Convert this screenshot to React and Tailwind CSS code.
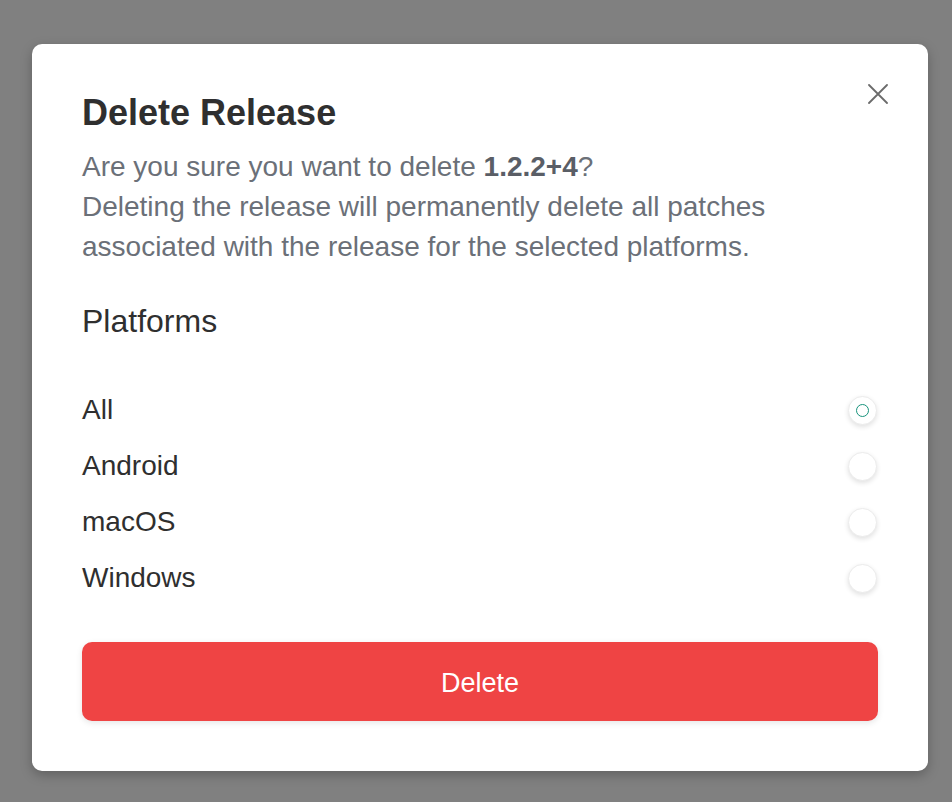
import { useState } from "react";

const platforms = ["All", "Android", "macOS", "Windows"];

function Radio({ checked, onClick }) {
  return (
    <button
      type="button"
      onClick={onClick}
      className="w-[29px] h-[29px] rounded-full bg-white border border-[#ececec] shadow-[0_2px_5px_rgba(0,0,0,0.12)] flex items-center justify-center"
    >
      {checked && (
        <span className="block w-[13px] h-[13px] rounded-full border-[1.5px] border-[#17937c]" />
      )}
    </button>
  );
}

export default function App() {
  const [selected, setSelected] = useState("All");

  return (
    <div
      className="min-h-screen bg-[#808080] pt-[44px] pl-[32px]"
      style={{ fontFamily: '"Liberation Sans", Arial, sans-serif' }}
    >
      <div className="relative w-[896px] bg-white rounded-[10px] shadow-[0_4px_12px_rgba(0,0,0,0.25)] px-[50px] pt-[47px] pb-[50px]">
        {/* 닫기 */}
        <button type="button" className="absolute right-[40px] top-[40px] w-[20px] h-[20px]">
          <svg viewBox="0 0 20 20" width="20" height="20" fill="none" stroke="#6b6b6b" strokeWidth="1.8" strokeLinecap="round">
            <path d="M1 1L19 19M19 1L1 19" />
          </svg>
        </button>

        <h1 className="text-[36px] leading-[44px] font-bold text-[#2f2f2f]">Delete Release</h1>

        <div className="mt-[12px] text-[28px] leading-[40px] text-[#6b7078]">
          <p>
            Are you sure you want to delete <span className="font-bold text-[#5a5e66]">1.2.2+4</span>?
          </p>
          <p>Deleting the release will permanently delete all patches associated with the release for the selected platforms.</p>
        </div>

        <h2 className="mt-[34px] text-[32px] leading-[40px] text-[#2f2f2f]">Platforms</h2>

        {/* 플랫폼 목록 */}
        <div className="mt-[41px] flex flex-col">
          {platforms.map((p) => (
            <div key={p} className="h-[56px] flex items-center justify-between pr-[1px]">
              <span className="text-[28px] text-[#2f2f2f]">{p}</span>
              <Radio checked={selected === p} onClick={() => setSelected(p)} />
            </div>
          ))}
        </div>

        <button
          type="button"
          className="mt-[36px] w-full h-[79px] pt-[3px] rounded-[10px] bg-[#ef4444] text-white text-[27px] shadow-[0_2px_6px_rgba(0,0,0,0.1)]"
        >
          Delete
        </button>
      </div>
    </div>
  );
}
